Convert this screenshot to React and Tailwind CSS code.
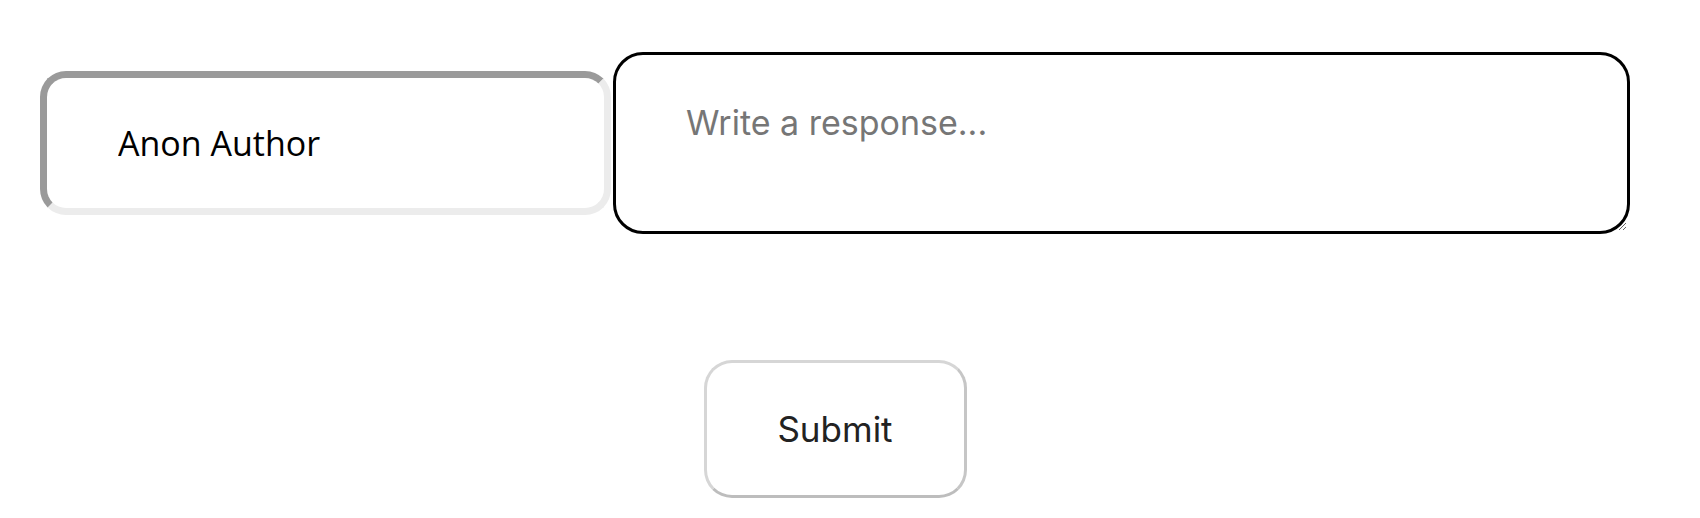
import { useState } from "react"

export default function App() {
    const [author, setAuthor] = useState("Anon Author")
    const [body, setBody] = useState("")

    return (
        <div className="min-h-screen bg-white pl-[40px] pt-[52px]">
            <form className="inline-flex flex-col items-center" onSubmit={(e) => e.preventDefault()}>
                {/* author + response */}
                <div className="flex items-center gap-[2px]">
                    <input
                        value={author}
                        onChange={(e) => setAuthor(e.target.value)}
                        className="w-[571px] h-[144px] rounded-[26px] border-[7px] border-t-[#9a9a9a] border-l-[#9a9a9a] border-b-[#ececec] border-r-[#ececec] bg-white pl-[71px] pr-4 text-[34px] text-black font-['Open_Sans',sans-serif] outline-none"
                    />
                    <textarea
                        value={body}
                        onChange={(e) => setBody(e.target.value)}
                        placeholder="Write a response..."
                        className="w-[1017px] h-[182px] rounded-[30px] border-[3px] border-black bg-white pt-[46px] pl-[70px] pr-[66px] text-[34px] leading-[1.3] font-['Inter',sans-serif] text-black placeholder:text-[#767676] outline-none"
                    />
                </div>

                <button
                    type="submit"
                    className="mt-[126px] w-[263px] h-[138px] rounded-[28px] border-[3px] border-[#d6d6d6] border-b-[#bdbdbd] border-r-[#c6c6c6] bg-white text-[35px] text-[#222] font-['Inter',sans-serif]"
                >
                    Submit
                </button>
            </form>
        </div>
    )
}
